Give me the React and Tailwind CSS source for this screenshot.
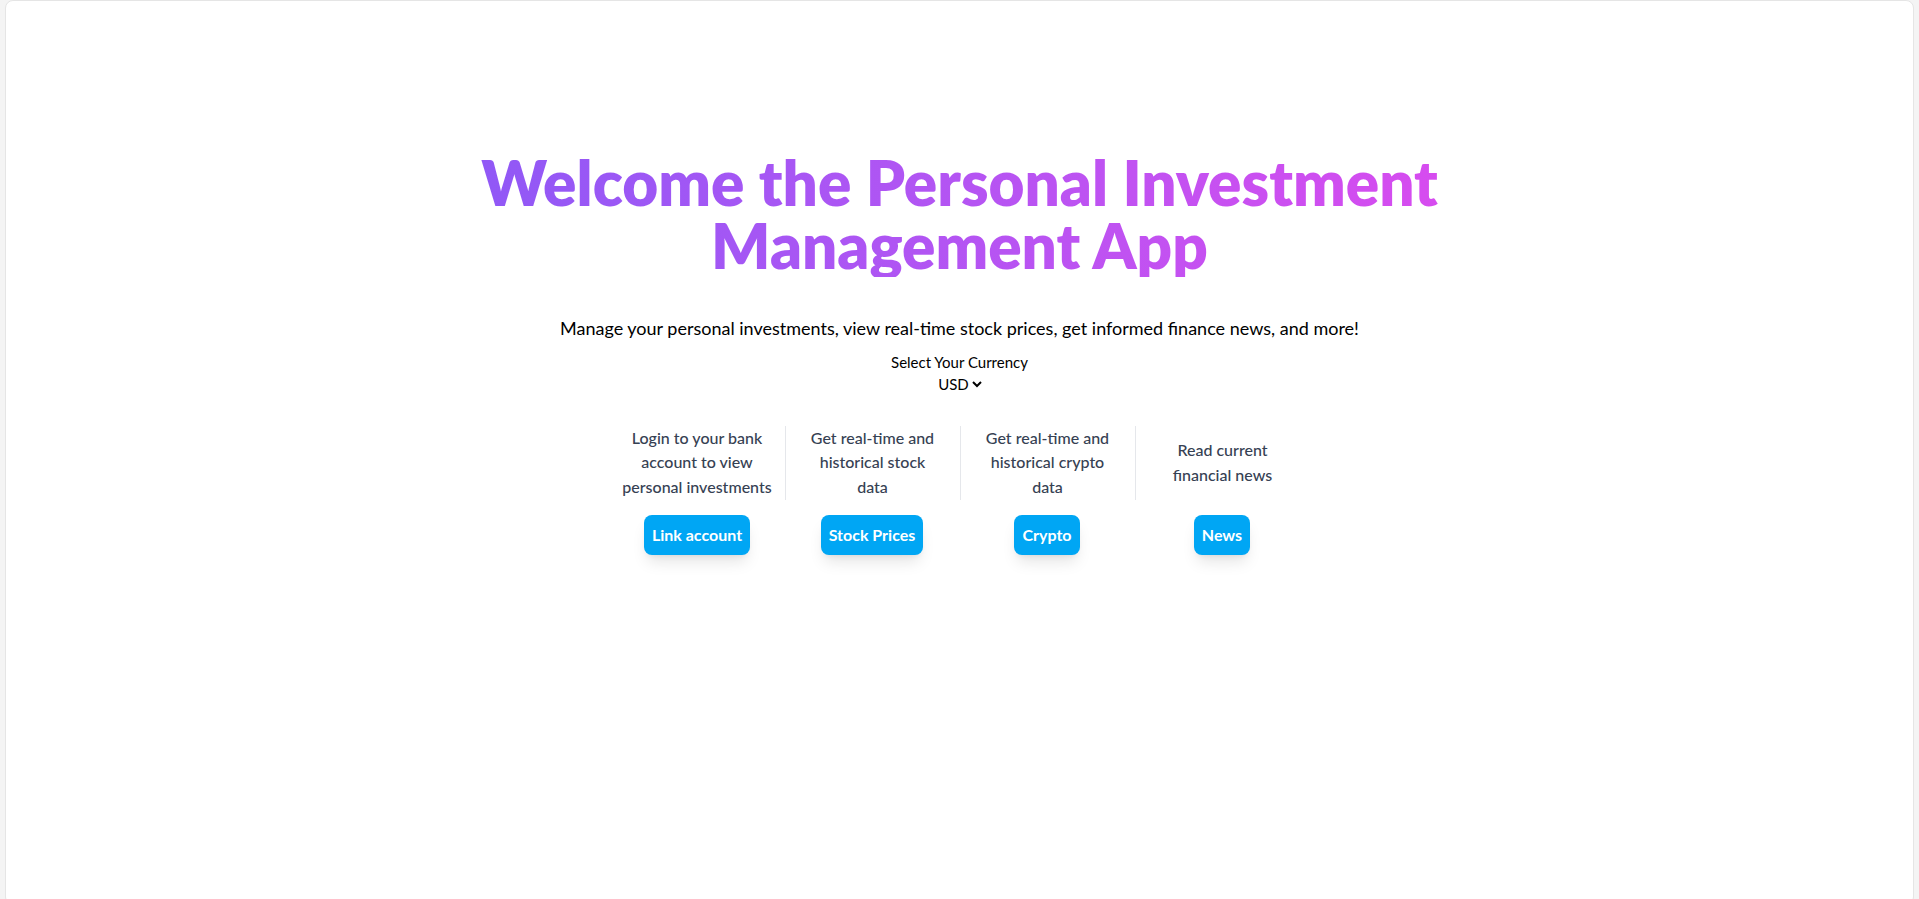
import React, { useState } from 'react'

const features = [
  { lines: ['Login to your bank', 'account to view', 'personal investments'], label: 'Link account' },
  { lines: ['Get real-time and', 'historical stock', 'data'], label: 'Stock Prices' },
  { lines: ['Get real-time and', 'historical crypto', 'data'], label: 'Crypto' },
  { lines: ['Read current', 'financial news'], label: 'News' },
]

export default function App() {
  const [currency, setCurrency] = useState('USD')

  return (
    <div className="min-h-screen bg-[#f4f4f4] px-[5px] font-['Lato','Segoe_UI',sans-serif]">
      <main className="min-h-[905px] bg-white rounded-lg border border-[#e5e5e5] flex flex-col items-center pt-[150px]">
        <h1 className="text-center text-[62px] leading-[63px] font-extrabold">
          <span className="inline-block bg-gradient-to-r from-[#8f58f6] to-[#d84bef] bg-clip-text text-transparent max-w-[1000px]">
            Welcome the Personal Investment Management App
          </span>
        </h1>
        <p className="mt-[37px] text-lg text-black">
          Manage your personal investments, view real-time stock prices, get informed finance news, and more!
        </p>
        <div className="mt-[9px] flex flex-col items-center text-[15px] text-black">
          <label htmlFor="currency">Select Your Currency</label>
          <select
            id="currency"
            value={currency}
            onChange={(e) => setCurrency(e.target.value)}
            className="bg-transparent text-center outline-none"
          >
            <option>USD</option>
            <option>EUR</option>
            <option>GBP</option>
            <option>JPY</option>
          </select>
        </div>
        <div className="mt-[32px] grid grid-cols-4 w-[700px]">
          {features.map((f, i) => (
            <div key={f.label} className="flex flex-col items-center">
              <div className={'h-[74px] w-full flex flex-col items-center justify-center px-2 text-center text-base leading-[24.5px] font-medium text-gray-700 ' + (i > 0 ? 'border-l border-gray-200' : '')}>
                {f.lines.map((line) => (
                  <span key={line}>{line}</span>
                ))}
              </div>
              <button
                type="button"
                className="mt-[15px] px-2 py-2 leading-6 rounded-lg bg-sky-500 text-white font-bold shadow-lg hover:bg-sky-600"
              >
                {f.label}
              </button>
            </div>
          ))}
        </div>
      </main>
    </div>
  )
}
